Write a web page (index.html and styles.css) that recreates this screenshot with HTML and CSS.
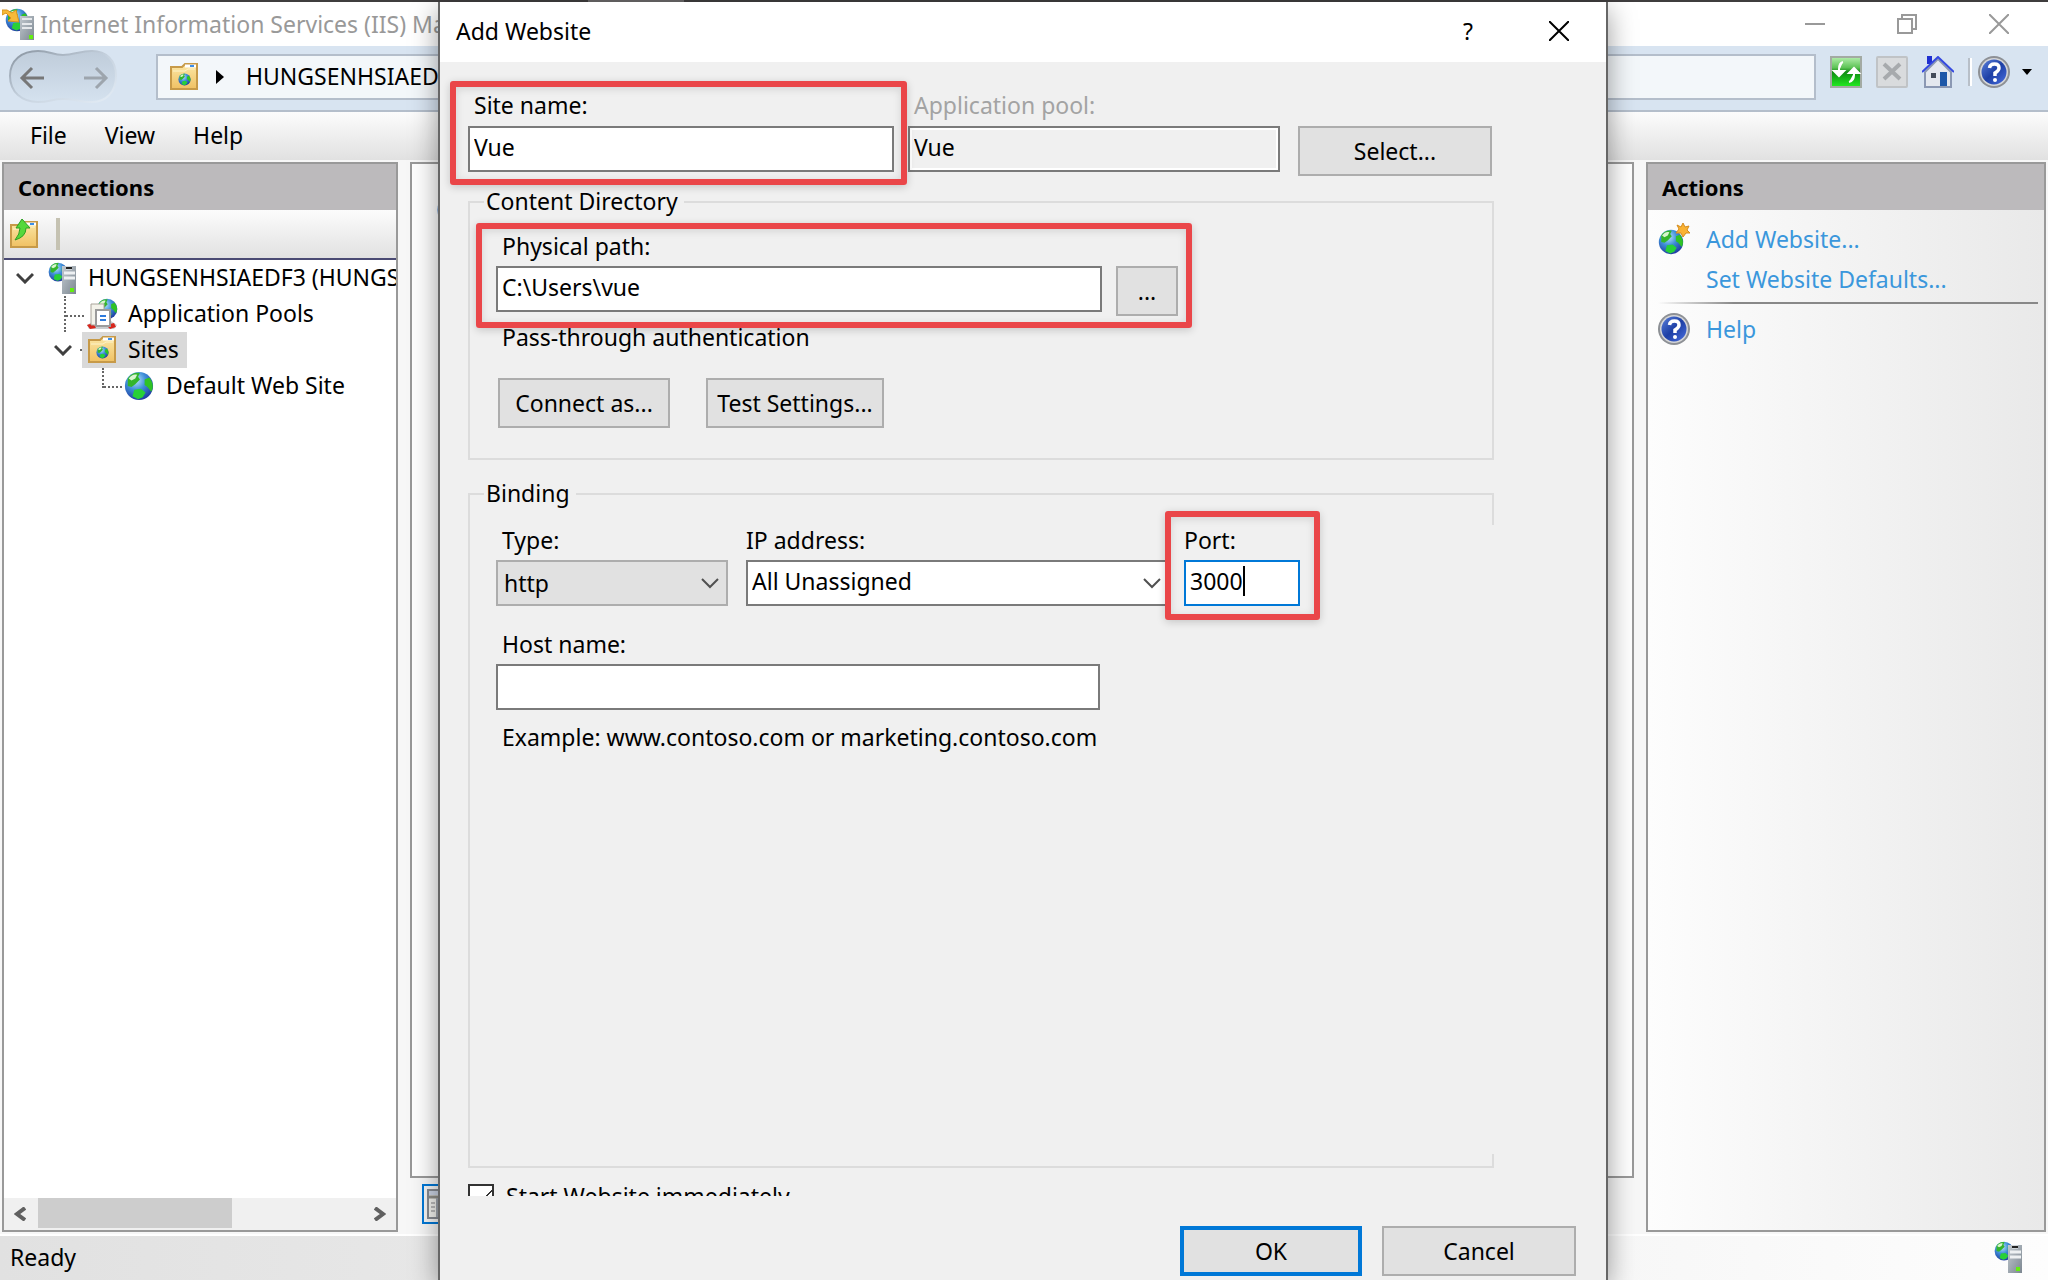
FILE: index.html
```html
<!DOCTYPE html>
<html lang="en">
<head>
<meta charset="utf-8">
<title>Internet Information Services (IIS) Manager</title>
<link rel="stylesheet" href="styles.css">
</head>
<body>
<svg class="defs" aria-hidden="true">
  <defs>
    <radialGradient id="sea" cx=".4" cy=".3" r=".75"><stop offset="0" stop-color="#b8e4fb"/><stop offset=".45" stop-color="#3f8fd8"/><stop offset="1" stop-color="#1c349c"/></radialGradient>
    <linearGradient id="fold" x1="0" y1="0" x2="0" y2="1"><stop offset="0" stop-color="#fbe7a6"/><stop offset="1" stop-color="#f0c163"/></linearGradient>
    <linearGradient id="steel" x1="0" y1="0" x2="1" y2="1"><stop offset="0" stop-color="#c2c9cf"/><stop offset="1" stop-color="#7c8791"/></linearGradient>
    <linearGradient id="blue" x1="0" y1="0" x2="1" y2="1"><stop offset="0" stop-color="#5a80dc"/><stop offset=".5" stop-color="#1d3fa5"/><stop offset="1" stop-color="#4a6fe0"/></linearGradient>
    <linearGradient id="green" x1="0" y1="0" x2="0" y2="1"><stop offset="0" stop-color="#b5efae"/><stop offset=".35" stop-color="#5fc457"/><stop offset=".5" stop-color="#0f8a12"/><stop offset="1" stop-color="#22ef22"/></linearGradient>
    <linearGradient id="pill" x1="0" y1="0" x2="0" y2="1"><stop offset="0" stop-color="#bfccda"/><stop offset="1" stop-color="#d5e2ef"/></linearGradient>
    <linearGradient id="pillEdge" x1="0" y1="0" x2="1" y2="1"><stop offset="0" stop-color="#87929e"/><stop offset=".5" stop-color="#c6d2df"/><stop offset="1" stop-color="#e4edf6"/></linearGradient>
    <symbol id="globe" viewBox="0 0 32 32"><circle cx="16" cy="16" r="15" fill="url(#sea)"/><path d="M4 8C7 3 12 1 17 2L15 6L17 9L12 14L8 17L4 16Z" fill="#34b52c"/><path d="M5 8C8 4 11 3 14 4L12 8L8 10Z" fill="#d8f5cf"/><path d="M22 9L27 7C31 12 32 18 29 22L25 17L22 15Z" fill="#2fc225"/><path d="M11 20L18 19L23 23L20 28L15 30L9 27Z" fill="#27d038"/></symbol>
    <symbol id="server" viewBox="0 0 28 32"><use href="#globe" x="0" y="0" width="20" height="20"/><path d="M14 4H28V32H14Z" fill="url(#steel)"/><path d="M18 6H24M16 11H27M16 16H27" stroke="#eef1f3" stroke-width="3"/><path d="M18 6H24" stroke="#222" stroke-width="2"/><rect x="22" y="26" width="4" height="4" fill="#63ee10"/></symbol>
    <symbol id="folder" viewBox="0 0 28 28"><path d="M1 4H12L15 1H27V26H1Z" fill="url(#fold)" stroke="#c79a48" stroke-width="2"/><path d="M15 3H26" stroke="#fff" stroke-width="3"/><path d="M20 3H24" stroke="#3c8ee8" stroke-width="2"/><path d="M3 8H15L18 6H25" stroke="#fdf3c9" stroke-width="1" fill="none"/></symbol>
    <symbol id="site-folder" viewBox="0 0 28 28"><use href="#folder" width="28" height="28"/><use href="#globe" x="8" y="10" width="13" height="13"/></symbol>
    <symbol id="help" viewBox="0 0 32 32"><circle cx="16" cy="16" r="16" fill="#8d9095"/><circle cx="16" cy="16" r="14" fill="#d5d6d8"/><circle cx="16" cy="16" r="12.500" fill="url(#blue)"/><path d="M11.500 12Q12 8 16.500 8Q21 8 21 12Q21 14.500 17 17V20" fill="none" stroke="#fff" stroke-width="3.500"/><circle cx="17" cy="24" r="2" fill="#fff"/></symbol>
    <symbol id="chevron" viewBox="0 0 18 12"><path d="M1 2L9 10L17 2" fill="none" stroke="currentColor" stroke-width="3"/></symbol>
    <symbol id="thin-chevron" viewBox="0 0 18 12"><path d="M1 1L9 9L17 1" fill="none" stroke="#505050" stroke-width="2"/></symbol>
  </defs>
</svg>

<div class="window">
  <div class="edge"></div>
  <header class="titlebar">
    <svg class="app-icon" viewBox="0 0 32 32"><use href="#globe" x="3" y="0" width="24" height="24"/><path d="M18 8H32V32H18Z" fill="url(#steel)"/><path d="M20 11H30M20 16H30M20 20H30" stroke="#e6e9ec" stroke-width="2"/><rect x="27" y="27" width="4" height="4" fill="#63ee10"/><path d="M0 2H5L10 5L14 2L17 14L6 13L9 10L4 5L0 7Z" fill="#f5ba3a" stroke="#d8921c"/></svg>
    <h1 class="app-title">Internet Information Services (IIS) Manager</h1>
    <div class="caption-buttons">
      <button class="plain" aria-label="Minimize"><svg width="20" height="20" viewBox="0 0 20 20"><path d="M0 10H20" stroke="#999" stroke-width="2"/></svg></button>
      <button class="plain" aria-label="Restore"><svg width="20" height="20" viewBox="0 0 20 20"><path d="M1 5H15V19H1ZM5 5V1H19V15H15" fill="none" stroke="#999" stroke-width="2"/></svg></button>
      <button class="plain" aria-label="Close"><svg width="20" height="20" viewBox="0 0 20 20"><path d="M0 0L20 20M20 0L0 20" stroke="#999" stroke-width="2"/></svg></button>
    </div>
  </header>

  <div class="navbar">
    <svg class="nav-arrows" viewBox="0 0 110 54"><path d="M30 1C42 1 44 5 55 5C66 5 72 1 84 1C98 1 108 10 108 26C108 42 98 52 84 52C72 52 66 49 55 49C44 49 42 52 30 52C14 52 2 42 2 26C2 10 14 1 30 1Z" fill="url(#pill)" stroke="url(#pillEdge)" stroke-width="2"/><path d="M24 18L14 28L24 38M14 28H36" fill="none" stroke="#777" stroke-width="3"/><path d="M88 18L98 28L88 38M98 28H76" fill="none" stroke="#9da5ad" stroke-width="3"/></svg>
    <div class="address">
      <svg width="28" height="28"><use href="#site-folder"/></svg>
      <svg width="8" height="14" viewBox="0 0 8 14"><path d="M0 0L8 7L0 14Z"/></svg>
      <span>HUNGSENHSIAEDF3</span>
    </div>
    <div class="nav-tools">
      <button class="plain" aria-label="Refresh"><svg width="32" height="32" viewBox="0 0 32 32"><rect x="1" y="1" width="30" height="30" fill="url(#green)" stroke="#a3aaa3" stroke-width="2"/><path d="M13 6Q9 7 9 13V15M4 15H14L9 20ZM19 26Q24 25 24 19V17M19 17H29L24 12Z" fill="#fff" stroke="#fff" stroke-width="2"/></svg></button>
      <button class="plain" aria-label="Stop"><svg width="32" height="32" viewBox="0 0 32 32"><rect x="1" y="1" width="30" height="30" rx="1" fill="#d9dbdd" stroke="#c0c3c6" stroke-width="2"/><path d="M8 8L24 23M24 8L8 23" stroke="#a7aaad" stroke-width="4"/></svg></button>
      <button class="plain" aria-label="Home"><svg width="32" height="32" viewBox="0 0 32 32"><path d="M5 0H10V8H5Z" fill="#1f2fd0"/><path d="M3 16L16 3L29 16V31H3Z" fill="#e4e8ef" stroke="#8b98b3" stroke-width="2"/><path d="M0 16L16 1L32 16" fill="none" stroke="#3448e0" stroke-width="2"/><rect x="9" y="17" width="5" height="5" fill="#444c5a"/><rect x="18" y="16" width="7" height="14" fill="#1d57a8"/></svg></button>
      <span class="nav-sep"></span>
      <button class="plain menu-button" aria-label="Help"><svg width="32" height="32"><use href="#help"/></svg><svg width="10" height="6" viewBox="0 0 10 6"><path d="M0 0H10L5 6Z"/></svg></button>
    </div>
  </div>

  <nav class="menubar">
    <button class="plain">File</button><button class="plain">View</button><button class="plain">Help</button>
  </nav>

  <main class="workspace">
    <section class="panel connections">
      <h2 class="panel-title">Connections</h2>
      <div class="panel-tools">
        <button class="plain" aria-label="Up"><svg width="28" height="30" viewBox="0 0 28 30"><use href="#folder" y="2" width="28" height="28"/><path d="M12 0L20 9L16 9Q16 18 5 21Q10 15 10 9L6 9Z" fill="#55d83c" stroke="#2d9e22"/></svg></button>
        <span class="tool-sep"></span>
      </div>
      <ul class="tree">
        <li class="node level-0"><svg class="twisty" width="18" height="12"><use href="#chevron"/></svg><span class="dots stub"></span><svg width="28" height="32"><use href="#server"/></svg><span class="node-text">HUNGSENHSIAEDF3 (HUNGSENHSIAEDF3\hungs)</span></li>
        <li class="node level-1"><span class="dots branch"></span><svg width="32" height="32" viewBox="0 0 32 32"><use href="#globe" x="10" y="0" width="22" height="22"/><path d="M1 27L8 23H25L31 27L28 31H3Z" fill="#c9cdd0"/><path d="M1 27L7 25L10 30L4 31ZM20 27L28 25L30 29L24 31Z" fill="#d8261c"/><path d="M5 6H18V27H5Z" fill="#f3f2ea" stroke="#aaa49a" stroke-width="1"/><path d="M10 12H24V28H10Z" fill="#fff" stroke="#9b9b9b" stroke-width="2"/><path d="M14 18H20M14 22H20" stroke="#2f7bdc" stroke-width="2"/></svg><span class="node-text">Application Pools</span></li>
        <li class="node level-2"><svg class="twisty" width="18" height="12"><use href="#chevron"/></svg><span class="dots stub"></span><span class="selected"><svg width="28" height="28"><use href="#site-folder"/></svg><span class="node-text">Sites</span></span></li>
        <li class="node level-3"><span class="dots branch last"></span><svg width="30" height="30"><use href="#globe"/></svg><span class="node-text">Default Web Site</span></li>
      </ul>
      <div class="scrollbar">
        <button class="plain" aria-label="Scroll left"><svg width="12" height="14" viewBox="0 0 12 14"><path d="M11 1L3 7L11 13" fill="none" stroke="#606060" stroke-width="4"/></svg></button>
        <span class="thumb"></span>
        <button class="plain" aria-label="Scroll right"><svg width="12" height="14" viewBox="0 0 12 14"><path d="M1 1L9 7L1 13" fill="none" stroke="#606060" stroke-width="4"/></svg></button>
      </div>
    </section>

    <section class="center">
      <div class="panel page"><svg width="48" height="48"><use href="#globe"/></svg></div>
      <button class="view-tab" aria-label="Features View"><svg width="32" height="30" viewBox="0 0 32 30"><rect x="1" y="1" width="30" height="28" fill="#f4f4f0" stroke="#878b92" stroke-width="2"/><path d="M2 4H30" stroke="#ccd4e4" stroke-width="4"/><path d="M2 8H30" stroke="#908f88" stroke-width="3"/><path d="M10 9V28" stroke="#a0a6ae" stroke-width="2"/><path d="M4 14H8M4 18H8M4 22H8M13 14H28M13 18H28M13 22H28" stroke="#bbb" stroke-width="2"/></svg></button>
    </section>

    <aside class="panel actions">
      <h2 class="panel-title">Actions</h2>
      <div class="action-list">
        <a class="action" href="#add"><svg width="32" height="32" viewBox="0 0 32 32"><use href="#globe" x="0" y="6" width="26" height="26"/><path d="M25 0L27 4L31 3L29 7L32 10L28 10L25 14L23 10L18 10L21 6L19 2L23 4Z" fill="#f9b233" stroke="#d58b1c" stroke-width="1"/></svg>Add Website...</a>
        <a class="action" href="#defaults"><span class="no-icon"></span>Set Website Defaults...</a>
        <hr class="action-rule">
        <a class="action" href="#help-topics"><svg width="32" height="32"><use href="#help"/></svg>Help</a>
      </div>
    </aside>
  </main>

  <footer class="statusbar"><span>Ready</span><svg width="28" height="32"><use href="#server"/></svg></footer>
</div>

<form class="dialog" role="dialog" aria-labelledby="dialog-title">
  <header class="dialog-title">
    <h2 id="dialog-title">Add Website</h2>
    <button type="button" class="plain question" aria-label="Help">?</button>
    <button type="button" class="plain" aria-label="Close"><svg width="20" height="20" viewBox="0 0 20 20"><path d="M0 0L20 20M20 0L0 20" stroke="#000" stroke-width="2"/></svg></button>
  </header>
  <div class="dialog-body">
    <div class="row top-row">
      <div class="field site-field marked"><label for="site">Site name:</label><input id="site" type="text" value="Vue"></div>
      <div class="field pool-field"><label for="pool" class="muted">Application pool:</label><input id="pool" type="text" value="Vue" readonly></div>
      <button type="button" class="btn wide">Select...</button>
    </div>

    <fieldset class="group directory">
      <legend>Content Directory</legend>
      <div class="row path-row marked">
        <div class="field path-field"><label for="path">Physical path:</label><input id="path" type="text" value="C:\Users\vue"></div>
        <button type="button" class="btn browse">...</button>
      </div>
      <p class="note auth">Pass-through authentication</p>
      <div class="row auth-row">
        <button type="button" class="btn connect">Connect as...</button>
        <button type="button" class="btn test">Test Settings...</button>
      </div>
    </fieldset>

    <fieldset class="group binding">
      <legend>Binding</legend>
      <div class="row">
        <div class="field type-field"><label for="type">Type:</label><span class="select-wrap"><select id="type" class="grey"><option>http</option></select><svg width="18" height="12"><use href="#thin-chevron"/></svg></span></div>
        <div class="field ip-field"><label for="ip">IP address:</label><span class="select-wrap"><select id="ip"><option>All Unassigned</option></select><svg width="18" height="12"><use href="#thin-chevron"/></svg></span></div>
        <div class="field port-field marked"><label for="port">Port:</label><span class="port-box"><input id="port" type="text" value="3000"><i class="caret"></i></span></div>
      </div>
      <div class="field host-field"><label for="host">Host name:</label><input id="host" type="text"></div>
      <p class="note">Example: www.contoso.com or marketing.contoso.com</p>
    </fieldset>

    <div class="start"><input id="start" type="checkbox" checked><label for="start">Start Website immediately</label></div>
    <div class="row buttons"><button type="submit" class="btn ok">OK</button><button type="button" class="btn wide">Cancel</button></div>
  </div>
</form>
</body>
</html>
```
FILE: styles.css
```css
* { box-sizing: border-box; }
body { margin: 0; height: 100vh; overflow: hidden; position: relative; background: #f7f7f7; color: #000; font: 23px/32px "Noto Sans", "Open Sans", sans-serif; }
.defs { position: absolute; width: 0; height: 0; }
svg { display: block; flex: none; }
h1, h2, p, ul { margin: 0; padding: 0; font-size: inherit; font-weight: normal; }
button, input, select { font: inherit; color: inherit; margin: 0; }
.plain { border: 0; padding: 0; background: none; }

/* main window */
.window { height: 100vh; display: flex; flex-direction: column; }
.edge { height: 2px; flex: none; background: linear-gradient(90deg, #3f3d3e 588px, #6a6869 588px 684px, #3f3d3e 684px); }
.titlebar { height: 44px; flex: none; display: flex; align-items: center; background: #fff; color: #999; }
.app-icon { width: 32px; height: 32px; margin: 0 6px 0 2px; }
.caption-buttons { margin-left: auto; display: flex; gap: 72px; padding-right: 39px; }
.navbar { height: 66px; flex: none; display: flex; align-items: flex-start; background: #d8e4f1; border-bottom: 2px solid #b4becb; padding: 4px 16px 0 8px; }
.nav-arrows { width: 110px; height: 54px; }
.address { flex: 1; height: 46px; margin: 4px 0 0 38px; display: flex; align-items: center; border: 2px solid #b4becb; background: #f3f7fa; padding-left: 12px; }
.address svg + svg { margin: 0 22px 0 18px; }
.address span { padding-bottom: 3px; }
.nav-tools { display: flex; align-items: center; gap: 14px; margin: 6px 0 0 14px; }
.nav-sep { width: 4px; height: 28px; background: #b8bfc8; border-right: 2px solid #fff; }
.nav-sep + .menu-button { margin-left: -8px; }
.menu-button { display: flex; align-items: center; gap: 12px; }
.menubar { height: 48px; flex: none; display: flex; align-items: center; gap: 38px; padding: 0 0 2px 30px; background: linear-gradient(#fcfcfc, #e1e1e1); }

.workspace { flex: 1; min-height: 0; display: grid; grid-template-columns: 396px 1fr 400px; gap: 12px; padding: 2px 2px; }
.panel { border: 2px solid #999; background: #fff; min-width: 0; }
.panel-title { height: 46px; padding-left: 14px; line-height: 46px; font-weight: bold; font-size: 22px; background: #bcbabc; }
.connections { display: flex; flex-direction: column; overflow: hidden; }
.panel-tools { height: 50px; display: flex; align-items: center; gap: 18px; padding-left: 6px; background: linear-gradient(#fcfcfc, #e1e1e1); border-bottom: 2px solid #4a4a73; }
.tool-sep { width: 4px; height: 32px; background: #c5c2b2; }
.tree { flex: 1; list-style: none; overflow: hidden; }
.node { height: 36px; display: flex; align-items: center; white-space: nowrap; }
.node-text { margin-left: 12px; padding-bottom: 2px; }
.twisty { color: #404040; }
.level-0 { padding-left: 12px; }
.level-1 { padding-left: 60px; }
.level-1 .node-text { margin-left: 10px; }
.level-2 { padding-left: 50px; }
.level-3 { padding-left: 98px; }
.dots { border: 0 dotted #666; }
.stub { width: 6px; border-top-width: 2px; margin: 0 6px 0 8px; }
.level-2 .stub { margin-right: 0; }
.branch { width: 22px; height: 36px; border-left-width: 2px; background: repeating-linear-gradient(90deg, #666 0 2px, transparent 2px 4px) 0 19px / 100% 2px no-repeat; }
.branch.last { height: 20px; align-self: flex-start; background-position: 0 18px; }
.selected { height: 36px; display: flex; align-items: center; padding: 0 8px 0 6px; margin-left: -4px; background: #d9d9d9; }
.scrollbar { height: 32px; display: flex; align-items: center; background: #f0f0f0; padding: 0 10px; }
.thumb { width: 194px; height: 30px; margin: 0 auto 2px 12px; background: #cdcdcd; }
.center { display: flex; flex-direction: column; align-items: flex-start; }
.page { flex: 1; width: 100%; padding: 22px 0 0 24px; }
.view-tab { margin: 6px 0 8px 12px; height: 40px; padding: 3px; background: #f7f7f7; border: 2px solid #0078d7; }
.actions { background: linear-gradient(90deg, #fdfdfd, #e9e9e9); }
.action-list { display: flex; flex-direction: column; padding: 9px 6px 0 10px; }
.action { height: 40px; display: flex; align-items: center; gap: 16px; color: #3b97dc; text-decoration: none; }
.no-icon { width: 32px; }
.action-rule { width: 100%; height: 2px; margin: 3px 0 5px; border: 0; background: linear-gradient(90deg, transparent, #888 20%); }
.statusbar { height: 46px; flex: none; display: flex; align-items: center; justify-content: space-between; padding: 0 26px 2px 10px; border-top: 2px solid #fff; background: linear-gradient(90deg, #e1e1e1, #fdfdfd); }

/* dialog window over the main one */
.dialog { position: absolute; top: 2px; bottom: 0; left: 438px; right: 440px; min-width: 1100px; display: flex; flex-direction: column; background: #f0f0f0; border: 2px solid #666; border-width: 0 2px; box-shadow: 0 8px 26px rgba(0, 0, 0, .4); }
.dialog-title { height: 60px; flex: none; display: flex; align-items: center; background: #fff; padding: 0 37px 2px 16px; }
.question { margin: 0 76px 0 auto; }
.dialog-body { flex: 1; display: flex; flex-direction: column; padding: 28px 30px 4px 28px; }
.row { display: flex; align-items: flex-end; }
.field { display: flex; flex-direction: column; position: relative; }
.field label { padding-left: 6px; height: 36px; }
input[type="text"], select { width: 100%; height: 46px; border: 2px solid #7a7a7a; border-radius: 0; background: #fff; padding: 0 4px 4px; outline: 0; }
.site-field { width: 426px; }
.pool-field { width: 372px; margin: 0 18px 0 14px; }
.top-row .field label { height: 37px; margin-top: -1px; }
.muted { color: #a3a3a3; }
.pool-field input { background: #f0f0f0; box-shadow: inset 0 0 0 2px #fff; }
.btn { height: 50px; flex: none; border: 2px solid #adadad; background: #e1e1e1; padding: 0; }
.top-row .btn { margin-bottom: -4px; }
.wide { width: 194px; }

/* red call-out frames */
.marked { position: relative; }
.marked::after { content: ""; position: absolute; z-index: 1; inset: -9px -13px -13px -18px; border: 6px solid #ea4649; border-radius: 3px; box-shadow: 0 2px 8px rgba(0, 0, 0, .18), inset 0 2px 8px rgba(0, 0, 0, .12); pointer-events: none; }
.path-row.marked::after { inset: -7px -14px -16px -20px; }
.port-field.marked::after { inset: -13px -20px -14px -19px; }

.group { width: 1026px; margin: 0; min-width: 0; border: 2px solid #dcdcdc; padding: 0 26px; }
.group legend { height: 32px; line-height: 30px; margin-left: -12px; padding: 0 6px 0 2px; }
.directory { margin-top: 14px; padding-bottom: 30px; }
.path-row { width: 682px; gap: 14px; margin-top: 12px; }
.path-field { width: 606px; }
.path-row .btn { width: 62px; margin-bottom: -4px; }
.note { padding-left: 6px; height: 32px; }
.auth { margin-top: 9px; }
.auth-row { gap: 36px; margin: 25px 0 0 2px; }
.connect { width: 172px; }
.test { width: 178px; }
.binding { flex: 1; margin-top: 18px; padding-top: 14px; border-right: 0; padding-right: 28px; background: linear-gradient(#dcdcdc, #dcdcdc) right 0 / 2px 30px no-repeat, linear-gradient(#dcdcdc, #dcdcdc) right bottom / 2px 12px no-repeat; }
.select-wrap { position: relative; display: block; }
.select-wrap svg { position: absolute; right: 9px; top: 18px; pointer-events: none; }
select { appearance: none; }
select.grey { background: #e1e1e1; border-color: #adadad; padding: 0 6px; }
.type-field { width: 232px; }
.ip-field { width: 424px; margin: 0 14px 0 18px; }
.field.ip-field label, .field.port-field label { padding-left: 0; }
.port-field { width: 116px; }
.port-field input { border-color: #0078d7; }
.port-box { position: relative; }
.caret { position: absolute; left: 59px; top: 6px; width: 2px; height: 30px; background: #000; }
.host-field { width: 604px; margin-top: 22px; }
.binding .note { margin-top: 11px; }
.start { height: 12px; margin-top: 16px; display: flex; gap: 12px; overflow: hidden; flex: none; }
.start input { appearance: none; flex: none; width: 26px; height: 26px; border: 2px solid #333; background: linear-gradient(135deg, transparent 46%, #333 46% 56%, transparent 56%) 10px 4px / 12px 12px no-repeat #fff; }
.start label { margin-top: -4px; }
.buttons { gap: 20px; justify-content: flex-end; margin-top: 30px; }
.ok { width: 182px; border: 4px solid #0078d7; }
```
